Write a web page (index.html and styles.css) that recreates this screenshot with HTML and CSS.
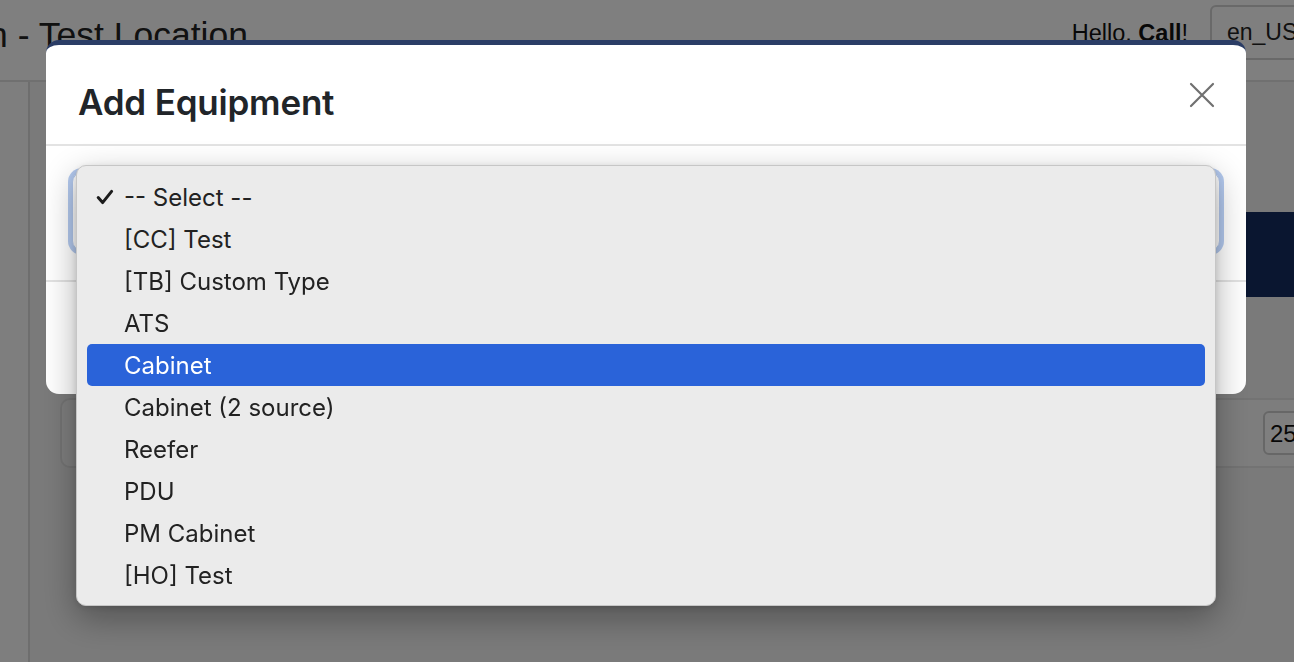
FILE: index.html
```html
<!DOCTYPE html>
<html lang="en">
<head>
<meta charset="utf-8">
<title>Add Equipment</title>
<link rel="stylesheet" href="styles.css">
</head>
<body>
<div class="page">
  <header class="topbar">
    <h1 class="loc-title">Kevin - Test Location</h1>
    <div class="user-area">
      <span class="hello">Hello, <b>Call</b>!</span>
      <div class="lang-select">en_US</div>
    </div>
  </header>
  <div class="layout">
    <aside class="sidebar"></aside>
    <main class="content">
      <div class="banner"></div>
      <div class="card">
        <div class="page-size">25</div>
      </div>
    </main>
  </div>
</div>

<div class="backdrop"></div>

<div class="modal">
  <div class="modal-header">
    <h2 class="modal-title">Add Equipment</h2>
    <button class="close-btn" aria-label="Close">
      <svg width="26" height="26" viewBox="0 0 26 26"><path d="M2 2 L24 24 M24 2 L2 24" stroke="#707070" stroke-width="2.2" fill="none" stroke-linecap="round"/></svg>
    </button>
  </div>
  <div class="modal-body">
    <div class="select-field"></div>
  </div>
  <div class="modal-footer"></div>

  <ul class="menu">
    <li class="item checked"><svg class="check" width="18" height="16" viewBox="0 0 18 16"><path d="M2.2 8.6 L6.6 13.6 L15.6 2.4" stroke="#1c1c1c" stroke-width="3" fill="none" stroke-linecap="round" stroke-linejoin="round"/></svg>-- Select --</li>
    <li class="item">[CC] Test</li>
    <li class="item">[TB] Custom Type</li>
    <li class="item">ATS</li>
    <li class="item active">Cabinet</li>
    <li class="item">Cabinet (2 source)</li>
    <li class="item">Reefer</li>
    <li class="item">PDU</li>
    <li class="item">PM Cabinet</li>
    <li class="item">[HO] Test</li>
  </ul>
</div>
</body>
</html>
```

FILE: styles.css
```css
* { box-sizing: border-box; }

html, body {
  margin: 0;
  padding: 0;
  height: 100%;
  overflow: hidden;
}

body {
  font-family: "Liberation Sans", Arial, sans-serif;
  color: #212529;
  background: #f4f4f4;
}

.page {
  width: 1330px;
}

.topbar {
  height: 82px;
  background: #ffffff;
  border-bottom: 2px solid #e0e0e0;
  display: flex;
  align-items: flex-start;
  justify-content: space-between;
}

.loc-title {
  margin: 15px 0 0 -81px;
  font-size: 35.5px;
  font-weight: 400;
  color: #222;
  font-family: "Liberation Sans", Arial, sans-serif;
  white-space: nowrap;
}

.user-area {
  display: flex;
  align-items: flex-start;
  gap: 22px;
  margin-right: 0;
}

.hello {
  margin-top: 20px;
  font-size: 23.5px;
  color: #111;
}

.hello b { font-weight: 700; }

.lang-select {
  margin-top: 5px;
  width: 120px;
  height: 55px;
  border: 2px solid #d2d2d2;
  border-radius: 6px;
  background: #fff;
  padding: 12px 0 0 15px;
  font-size: 23px;
  color: #222;
}

.layout {
  display: flex;
  height: 580px;
}

.sidebar {
  width: 30px;
  background: #fcfcfc;
  border-right: 2px solid #dcdcdc;
}

.content {
  flex: 1;
  padding: 130px 0 0 30px;
  display: flex;
  flex-direction: column;
}

.banner {
  height: 85px;
  background: #142c60;
}

.card {
  margin-top: 101px;
  height: 70px;
  background: #fbfbfb;
  border: 2px solid #e6e6e6;
  border-radius: 10px;
  display: flex;
  justify-content: flex-end;
  align-items: center;
}

.page-size {
  width: 70px;
  height: 44px;
  margin-right: -5px;
  border: 2px solid #cfcfcf;
  border-radius: 6px;
  background: #fff;
  font-size: 24px;
  padding: 7px 0 0 5px;
  color: #111;
}

.backdrop {
  position: fixed;
  inset: 0;
  background: rgba(0, 0, 0, 0.5);
}

.modal {
  position: fixed;
  left: 46px;
  top: 40px;
  width: 1200px;
  height: 354px;
  background: #ffffff;
  border-top: 5px solid #2b3d66;
  border-radius: 13px;
  display: flex;
  flex-direction: column;
}

.modal-header {
  height: 101px;
  border-bottom: 2px solid #e3e3e3;
  display: flex;
  align-items: center;
  justify-content: space-between;
  padding: 14px 31px 0 32px;
}

.modal-title {
  margin: 0;
  font-family: Inter, "Liberation Sans", sans-serif;
  font-size: 35px;
  font-weight: 600;
  color: #212529;
  letter-spacing: -0.2px;
}

.close-btn {
  border: 0;
  background: transparent;
  padding: 0;
  width: 26px;
  height: 26px;
  display: flex;
  margin-top: -14px;
}

.modal-body {
  height: 136px;
  border-bottom: 2px solid #e3e3e3;
  padding: 26px 26px 27px 26px;
}

.select-field {
  height: 79px;
  border: 1px solid #b3c9ee;
  border-radius: 10px;
  background: #fff;
  box-shadow: 0 0 0 4px #b3c9ee;
}

.modal-footer {
  flex: 1;
}

.menu {
  position: absolute;
  left: 30px;
  top: 120px;
  width: 1140px;
  height: 441px;
  margin: 0;
  padding: 10px 10px 9px 10px;
  list-style: none;
  background: #ebebeb;
  border: 1px solid #c6c6c6;
  border-radius: 10px;
  box-shadow: 0 12px 34px rgba(0, 0, 0, 0.32), 0 2px 6px rgba(0, 0, 0, 0.12);
  font-family: Inter, "Liberation Sans", sans-serif;
  font-size: 24px;
  color: #222222;
}

.item {
  height: 42px;
  display: flex;
  align-items: center;
  padding-left: 37px;
  border-radius: 5px;
  position: relative;
}

.item.checked .check {
  position: absolute;
  left: 9px;
  top: 13px;
}

.item.active {
  background: #2a63d9;
  color: #ffffff;
}
```
